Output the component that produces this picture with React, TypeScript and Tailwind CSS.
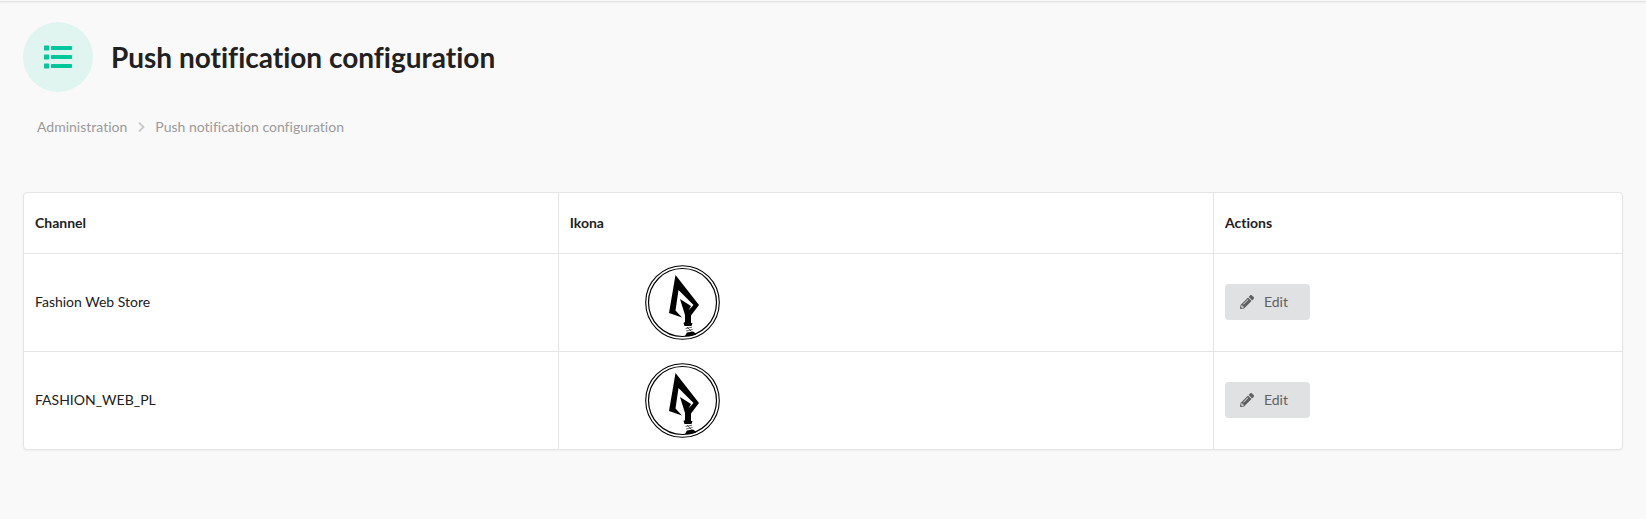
import { FaPencilAlt } from "react-icons/fa";

const channels = ["Fashion Web Store", "FASHION_WEB_PL"];

function ListIcon() {
  return (
    <svg viewBox="0 0 28 24" className="h-6 w-7" fill="#00c89b" aria-hidden="true">
      {[1, 10, 19].map((y) => (
        <g key={y}>
          <rect x="0" y={y - 0.6} width="5" height="5" rx="0.6" />
          <rect x="7" y={y - 0.1} width="21" height="4" rx="0.7" />
        </g>
      ))}
    </svg>
  );
}

function ChannelLogo() {
  return (
    <svg viewBox="0 0 75 75" className="h-[75px] w-[75px]" role="img" aria-label="Channel icon">
      <circle cx="37.5" cy="37.5" r="36.8" fill="none" stroke="#000" strokeWidth="1.1" />
      <circle cx="37.5" cy="37.5" r="34" fill="none" stroke="#000" strokeWidth="1.2" />
      <path d="M30.500 10 L54 40 L46 50.500 L46 58 L47.500 58 L46.500 61 L39.500 61 L38.500 58 L40 57 L40 50 L35 34 L46 41 L43.500 45.500 L48.500 40 L33.500 25 L30.500 45.500 L37 52.500 L24 48 Z" />
      <path d="M40.500 63.500 L47 62.200 M41 66 L47.500 64.500 M42 62 L46.500 66.500" stroke="#000" strokeWidth="0.6" fill="none" />
      <path d="M42 67.500 L48 66.500 L51.500 69 L46 71 L40 71 Z" />
    </svg>
  );
}

export default function App() {
  return (
    <div className="min-h-screen bg-[#f9f9f9] font-['Lato',sans-serif] text-sm text-[#212121] [font-variant-ligatures:no-common-ligatures]">
      <div className="h-0.5 border-b border-[#e2e3e3] bg-[#f9f9f9] shadow-[0_1px_2px_0_rgba(34,36,38,0.05)]" />
      <main className="px-[23px] pt-5">
        <header className="flex items-center gap-[18px]">
          <span className="flex size-[70px] items-center justify-center rounded-full bg-[#e0f5f0]">
            <ListIcon />
          </span>
          <h1 className="text-[28px] leading-9 font-bold">Push notification configuration</h1>
        </header>
        <nav aria-label="Breadcrumb" className="mt-[25px] flex h-5 items-center px-3.5 text-[#9b9b9b]">
          <a href="#administration">Administration</a>
          <svg viewBox="0 0 7 10" className="mr-2.5 ml-[11px] h-2.5 w-[7px]" fill="none" stroke="#c9c9c9" strokeWidth="1.800" aria-hidden="true">
            <path d="M1 0.500 L5.500 5 L1 9.500" />
          </svg>
          <span>Push notification configuration</span>
        </nav>
        <div className="mt-[55px] overflow-hidden rounded border border-[#e4e5e5] bg-white shadow-[0_1px_2px_0_rgba(34,36,38,0.05)]">
          <table className="w-full table-fixed border-separate border-spacing-0 text-left">
            <thead>
              <tr className="h-[60px]">
                <th className="w-[33.4%] px-[11px] font-bold">Channel</th>
                <th className="w-[41%] border-l border-[#e4e5e5] px-[11px] font-bold">Ikona</th>
                <th className="border-l border-[#e4e5e5] px-[11px] font-bold">Actions</th>
              </tr>
            </thead>
            <tbody>
              {channels.map((name) => (
                <tr key={name}>
                  <td className="border-t border-[#e4e5e5] px-[11px] pt-[11px] pb-3">{name}</td>
                  <td className="border-t border-l border-[#e4e5e5] p-[11px]">
                    <div className="pl-[75px]">
                      <ChannelLogo />
                    </div>
                  </td>
                  <td className="border-t border-l border-[#e4e5e5] px-[11px] pt-[11px] pb-3">
                    <button type="button" className="flex h-9 items-center gap-2.5 rounded bg-[#e0e1e2] pr-[22px] pl-[15px] text-[#5f6061]">
                      <FaPencilAlt className="size-3.5" />
                      Edit
                    </button>
                  </td>
                </tr>
              ))}
            </tbody>
          </table>
        </div>
      </main>
    </div>
  );
}
